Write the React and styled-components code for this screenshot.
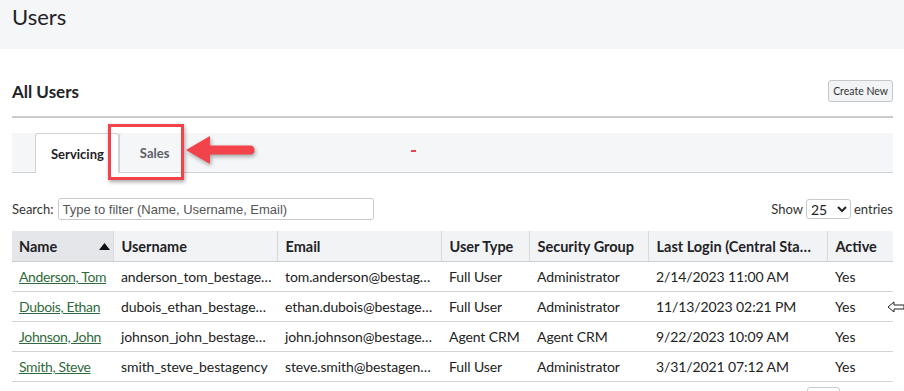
import React from "react";
import styled, { createGlobalStyle } from "styled-components";

const GlobalStyle = createGlobalStyle`
  body {
    margin: 0;
    background: #fff;
    font-family: "Lato", "Noto Sans", sans-serif;
    color: #222;
  }
`;

const PageHeader = styled.div`
  height: 49px;
  background: #f5f6f8;
  padding: 3px 12px 0;
  box-sizing: border-box;
  font-size: 22px;
  color: #1f2226;
`;

const Main = styled.div`
  padding: 0 11px 0 12px;
`;

const TitleRow = styled.div`
  display: flex;
  justify-content: space-between;
  align-items: center;
  height: 28px;
  margin-top: 28px;
`;

const Title = styled.h2`
  margin: 0;
  font-size: 17px;
  font-weight: 700;
  color: #1f2226;
`;

const Button = styled.button`
  height: 22px;
  padding: 0 4px;
  background: #f2f3f5;
  border: 1px solid #c4c7cc;
  border-radius: 3px;
  font-family: inherit;
  font-size: 10.5px;
  color: #333;
`;

const Rule = styled.div`
  height: 2px;
  background: #c8cacd;
  margin-top: 11px;
`;

const TabBar = styled.div`
  position: relative;
  display: flex;
  height: 39px;
  margin-top: 15px;
  padding-left: 23px;
  background: #f5f6f8;
  border-bottom: 1px solid #cfd2d6;
`;

const Tab = styled.div`
  display: flex;
  align-items: center;
  padding: ${(p) => (p.$active ? "0 14px 0 15px" : "0 20px")};
  margin-bottom: ${(p) => (p.$active ? "-1px" : "0")};
  background: ${(p) => (p.$active ? "#fff" : "transparent")};
  border: 1px solid ${(p) => (p.$active ? "#cfd2d6" : "transparent")};
  border-bottom: none;
  border-left-color: #cfd2d6;
  border-radius: 3px 3px 0 0;
  font-size: 13px;
  font-weight: 700;
  color: ${(p) => (p.$active ? "#1f2226" : "#5b6068")};
`;

const Highlight = styled.div`
  position: absolute;
  left: 96px;
  top: -9px;
  width: 70px;
  height: 50px;
  border: 3px solid #f2434b;
  box-shadow: 1px 2px 4px rgba(0, 0, 0, 0.35);
`;

const Arrow = styled.svg`
  position: absolute;
  left: 172px;
  top: 1px;
  filter: drop-shadow(1px 2px 2px rgba(0, 0, 0, 0.35));
`;

const Dash = styled.div`
  position: absolute;
  left: 399px;
  top: 17px;
  width: 5px;
  height: 2px;
  background: #f2434b;
`;

const SearchRow = styled.div`
  display: flex;
  justify-content: space-between;
  align-items: center;
  margin-top: 25px;
  font-size: 13px;
  color: #333;
`;

const Field = styled.label`
  display: flex;
  align-items: center;
  gap: ${(p) => p.$gap || 4}px;
`;

const Input = styled.input`
  width: 316px;
  height: 22px;
  box-sizing: border-box;
  border: 1px solid #c8cacd;
  border-radius: 3px;
  padding: 0 4px;
  font-family: "Liberation Sans", Arial, sans-serif;
  font-size: 13px;
  &::placeholder {
    color: #555;
  }
`;

const Select = styled.select`
  width: 45px;
  height: 20px;
  border: 1px solid #c8cacd;
  border-radius: 3px;
  font-family: inherit;
  font-size: 14px;
  color: #222;
  background: #fff;
`;

const Table = styled.table`
  width: 100%;
  margin-top: 11px;
  border-collapse: collapse;
  table-layout: fixed;
  font-size: 14px;
`;

const Th = styled.th`
  height: 30px;
  padding: 0 8px;
  text-align: left;
  font-size: 14.5px;
  font-weight: 700;
  color: #1f2226;
  background: ${(p) => (p.$sorted ? "#e4e6e9" : "#f2f3f5")};
  border-right: 1px solid #d6d8db;
  border-bottom: 1px solid #ccd0d4;
  white-space: nowrap;
  overflow: hidden;
  text-overflow: ellipsis;
  &:first-child {
    padding: 0 3px 0 7px;
  }
  &:last-child {
    border-right: none;
  }
`;

const SortHead = styled.div`
  display: flex;
  justify-content: space-between;
  align-items: center;
`;

const Td = styled.td`
  height: 29px;
  padding: 0 4px 0 8px;
  border-bottom: 1px solid #d0d3d7;
  white-space: nowrap;
  overflow: hidden;
  text-overflow: ellipsis;
  letter-spacing: -0.1px;
  color: #222;
  &:first-child {
    padding: 0 0 0 7px;
  }
`;

const NameLink = styled.a`
  color: #2f6b3c;
  text-decoration: underline;
  letter-spacing: -0.35px;
`;

const Pointer = styled.svg`
  position: absolute;
  left: 887px;
  top: 301px;
`;

const Pager = styled.div`
  position: absolute;
  left: 807px;
  top: 387px;
  width: 31px;
  height: 10px;
  border: 1px solid #c8cacd;
  border-radius: 3px;
`;

const cols = [101, 164, 164, 88, 119, 179, 66];

const users = [
  ["Anderson, Tom", "anderson_tom_bestagency", "tom.anderson@bestagency.com", "Full User", "Administrator", "2/14/2023 11:00 AM"],
  ["Dubois, Ethan", "dubois_ethan_bestagency", "ethan.dubois@bestagency.com", "Full User", "Administrator", "11/13/2023 02:21 PM"],
  ["Johnson, John", "johnson_john_bestagency", "john.johnson@bestagency.com", "Agent CRM", "Agent CRM", "9/22/2023 10:09 AM"],
  ["Smith, Steve", "smith_steve_bestagency", "steve.smith@bestagency.com", "Full User", "Administrator", "3/31/2021 07:12 AM"],
];

export default function App() {
  return (
    <>
      <GlobalStyle />
      <PageHeader>Users</PageHeader>
      <Main>
        <TitleRow>
          <Title>All Users</Title>
          <Button>Create New</Button>
        </TitleRow>
        <Rule />
        <TabBar>
          <Tab $active>Servicing</Tab>
          <Tab>Sales</Tab>
          <Highlight />
          <Arrow width="74" height="34" viewBox="0 0 74 34">
            <path d="M2 16 L26 2 L26 11.5 L66 11.5 Q70.5 11.5 70.5 16 Q70.5 20.5 66 20.5 L26 20.5 L26 30 Z" fill="#f2434b" />
          </Arrow>
          <Dash />
        </TabBar>
        <SearchRow>
          <Field>
            Search:
            <Input placeholder="Type to filter (Name, Username, Email)" />
          </Field>
          <Field $gap={3}>
            Show
            <Select defaultValue="25">
              <option>10</option>
              <option>25</option>
              <option>50</option>
            </Select>
            entries
          </Field>
        </SearchRow>
        <Table>
          <colgroup>
            {cols.map((w, i) => (
              <col key={i} style={{ width: w }} />
            ))}
          </colgroup>
          <thead>
            <tr>
              <Th $sorted>
                <SortHead>
                  Name
                  <svg width="11" height="7" viewBox="0 0 11 7">
                    <path d="M0 7 L5.5 0 L11 7 Z" fill="#111" />
                  </svg>
                </SortHead>
              </Th>
              <Th>Username</Th>
              <Th>Email</Th>
              <Th>User Type</Th>
              <Th>Security Group</Th>
              <Th>Last Login (Central Standard Time)</Th>
              <Th>Active</Th>
            </tr>
          </thead>
          <tbody>
            {users.map((u) => (
              <tr key={u[1]}>
                <Td>
                  <NameLink href="#">{u[0]}</NameLink>
                </Td>
                <Td>{u[1]}</Td>
                <Td>{u[2]}</Td>
                <Td>{u[3]}</Td>
                <Td>{u[4]}</Td>
                <Td>{u[5]}</Td>
                <Td>Yes</Td>
              </tr>
            ))}
          </tbody>
        </Table>
      </Main>
      <Pointer width="17" height="12" viewBox="0 0 17 12">
        <path d="M1 6 L7 1 L7 4 L17 4 L17 8 L7 8 L7 11 Z" fill="#fff" stroke="#222" strokeWidth="1" />
      </Pointer>
      <Pager />
    </>
  );
}
